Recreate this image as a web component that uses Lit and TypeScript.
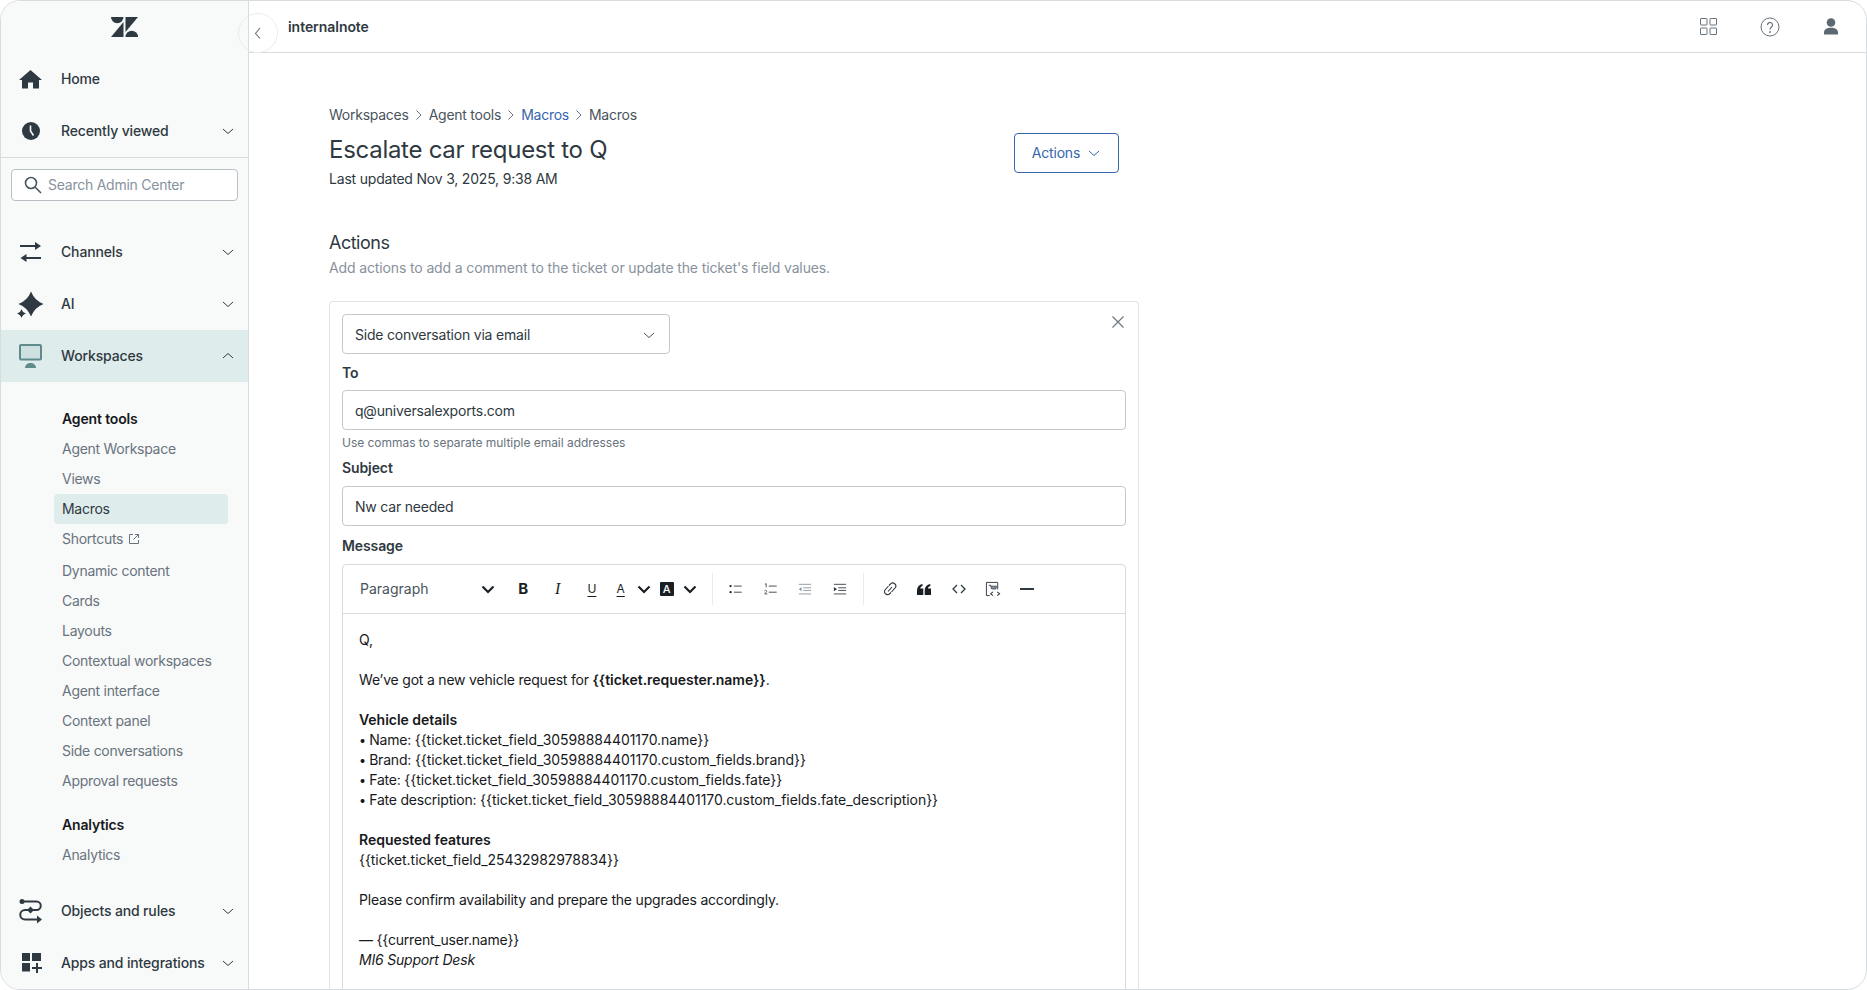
import { LitElement, html, css, svg } from "lit";
import { customElement } from "lit/decorators.js";

const ink = "#2f3941";
const chev = html`<svg class="chev" width="14" height="14" viewBox="0 0 14 14" fill="none" stroke="currentColor" stroke-width="1"><path d="M2 5l5 4.500L12 5"/></svg>`;
const chevUp = html`<svg class="chev" width="14" height="14" viewBox="0 0 14 14" fill="none" stroke="currentColor" stroke-width="1"><path d="M2 9l5-4.500L12 9"/></svg>`;
const tbChev = html`<svg width="16" height="16" viewBox="0 0 16 16" fill="none" stroke="#1a1f24" stroke-width="2.200"><path d="M2.500 5.500L8 11l5.500-5.500"/></svg>`;

const icons: Record<string, unknown> = {
  home: svg`<path fill="${ink}" d="M11.500 4L23 14h-3v8.500h-6v-6H9v6H3V14H0z"/>`,
  clock: svg`<circle cx="12" cy="13" r="9" fill="${ink}"/><path d="M11.500 7.500V13l3 4.500" stroke="#f8f9f9" stroke-width="1.600" fill="none"/>`,
  channels: svg`<g fill="none" stroke="${ink}" stroke-width="2"><path d="M1 7h18M3 19h19"/></g><path fill="${ink}" d="M16 3l6 4-6 4zM7.500 15l-6 4 6 4z"/>`,
  ai: svg`<path fill="${ink}" d="M12 .5Q15.500 9.500 24.500 13 15.500 16.500 12 25.500 8.500 16.500-.5 13 8.500 9.500 12 .5z"/><path fill="${ink}" d="M2.500 18Q3.500 21.500 7 22.500 3.500 23.500 2.500 27 1.500 23.500-2 22.500 1.500 21.500 2.500 18z"/>`,
  work: svg`<rect x="1" y="2" width="21" height="14.500" rx="1" fill="#cfe0e1" stroke="#5f8b8d" stroke-width="2"/><path fill="#5f8b8d" d="M6 25c0-3 2.500-5 5.500-5s5.500 2 5.500 5z"/>`,
  objects: svg`<g fill="none" stroke="${ink}" stroke-width="2"><path d="M4 3.500h13.500a4.200 4.200 0 0 1 0 8.500H6a4.500 4.500 0 0 0 0 9.500h14"/></g><circle cx="3" cy="3.500" r="2.500" fill="${ink}"/><path fill="${ink}" d="M11.500 8.500L15 12l-3.500 3.500L8 12zM18 17.500l5 4-5 4z"/>`,
  apps: svg`<path fill="${ink}" d="M3 3h8v8H3zM13 3h9v8h-9zM3 13h8v8.500H3zM17 13h2v4h4v2h-4v4h-2v-4h-4v-2h4z"/>`,
};

type Row = { label: string; icon: string; chev?: boolean; up?: boolean; active?: boolean };
const rowA: Row[] = [
  { label: "Home", icon: "home" },
  { label: "Recently viewed", icon: "clock", chev: true },
];
const rowB: Row[] = [
  { label: "Channels", icon: "channels", chev: true },
  { label: "AI", icon: "ai", chev: true },
  { label: "Workspaces", icon: "work", chev: true, up: true, active: true },
];
const rowC: Row[] = [
  { label: "Objects and rules", icon: "objects", chev: true },
  { label: "Apps and integrations", icon: "apps", chev: true },
];
const subItems = ["Agent Workspace", "Views", "Macros", "Shortcuts", "Dynamic content", "Cards", "Layouts", "Contextual workspaces", "Agent interface", "Context panel", "Side conversations", "Approval requests"];

@customElement("app-root")
export class AppRoot extends LitElement {
  static styles = css`
    :host { display: block; width: 1867px; height: 990px; background: #fff; font-family: Inter, "Noto Sans", sans-serif; color: #2f3941; font-size: 14px; line-height: 20px; letter-spacing: -0.2px; }
    .frame { position: relative; box-sizing: border-box; width: 1867px; height: 990px; border: 1px solid #d8dcde; border-radius: 20px; overflow: hidden; display: flex; background: #fff; }
    .side { width: 248px; flex: none; box-sizing: border-box; background: #f8f9f9; border-right: 1px solid #d8dcde; display: flex; flex-direction: column; }
    .logo { height: 52px; display: flex; align-items: flex-start; justify-content: center; padding-top: 16px; box-sizing: border-box; }
    .row { height: 52px; display: flex; align-items: center; padding: 0 13px 0 18px; font-weight: 500; color: #2f3941; letter-spacing: -0.15px; }
    .row.active { background: #dfecec; }
    .row .ic { width: 24px; height: 26px; flex: none; margin-right: 18px; display: block; overflow: visible; }
    .row .lb { flex: 1; }
    .chev { color: #2f3941; display: block; flex: none; }
    .rule { height: 1px; background: #d8dcde; }
    .search { margin: 11px 10px 25px 10px; height: 32px; box-sizing: border-box; border: 1px solid #b9c0c5; border-radius: 4px; background: #fff; display: flex; align-items: center; padding-left: 12px; gap: 6px; color: #87929d; letter-spacing: -0.25px; }
    .sub { padding: 22px 20px 0 53px; height: 503px; box-sizing: border-box; display: flex; flex-direction: column; }
    .sub .head { height: 30px; display: flex; align-items: center; padding-left: 8px; color: #17191c; font-weight: 600; letter-spacing: -0.15px; }
    .sub .it { height: 30px; display: flex; align-items: center; padding-left: 8px; color: #68737d; border-radius: 4px; flex: none; gap: 4px; letter-spacing: -0.28px; }
    .sub .it.cur { background: #dfecec; color: #2f3941; }
    .sub .it.ext { margin-bottom: 2px; gap: 5px; }
    .sub .head.second { margin-top: 14px; }
    .main { flex: 1; min-width: 0; display: flex; flex-direction: column; }
    .top { height: 52px; flex: none; box-sizing: border-box; border-bottom: 1px solid #d8dcde; display: flex; align-items: center; padding: 0 27px 0 39px; font-weight: 600; font-size: 14px; letter-spacing: -0.05px; }
    .top .nm { flex: 1; }
    .top svg { display: block; }
    .tools { display: flex; align-items: center; gap: 43px; }
    .collapse { position: absolute; left: 237px; top: 12px; width: 40px; height: 40px; box-sizing: border-box; border: 1px solid #e9ebed; border-radius: 50%; display: flex; align-items: center; justify-content: center; }
    .page { padding: 52px 0 0 80px; width: 810px; }
    .crumbs { display: flex; align-items: center; color: #49545c; gap: 6px; letter-spacing: -0.25px; }
    .crumbs a { color: #3565ad; }
    .crumbs svg { display: block; }
    .hdr { display: flex; justify-content: space-between; align-items: flex-start; padding-right: 20px; }
    h1 { margin: 9px 0 0; font-size: 24px; line-height: 32px; font-weight: 400; color: #2f3941; letter-spacing: -0.28px; }
    .upd { margin-top: 3px; color: #2f3941; }
    .btn { margin-top: 28px; width: 105px; height: 40px; box-sizing: border-box; border: 1px solid #3565ad; border-radius: 4px; color: #3565ad; display: flex; align-items: center; justify-content: center; gap: 7px; font-weight: 400; }
    .btn .chev { color: #3565ad; }
    h2 { margin: 40px 0 0; font-size: 18px; line-height: 28px; font-weight: 400; color: #2f3941; letter-spacing: -0.5px; }
    .hint2 { margin-top: 1px; color: #87929d; letter-spacing: -0.13px; }
    .card { position: relative; margin-top: 23px; border: 1px solid #e1e4e6; border-bottom: none; border-radius: 4px 4px 0 0; padding: 12px 12px 0; }
    .x { position: absolute; right: 13px; top: 13px; display: block; }
    .sel { width: 328px; height: 40px; box-sizing: border-box; border: 1px solid #c2c8cc; border-radius: 4px; display: flex; align-items: center; justify-content: space-between; padding: 1px 13px 0 12px; }
    .sel .chev { color: #49545c; }
    label { display: block; font-weight: 600; color: #2f3941; letter-spacing: -0.1px; }
    .input { height: 40px; box-sizing: border-box; border: 1px solid #c2c8cc; border-radius: 4px; display: flex; align-items: center; padding: 1px 12px 0; margin-top: 8px; }
    .f1 { margin-top: 9px; }
    .f1 + .input { margin-top: 7px; }
    .hint { margin-top: 5px; font-size: 12px; line-height: 16px; color: #68737d; letter-spacing: -0.03px; }
    .f2 { margin-top: 7px; }
    .f3 { margin-top: 10px; }
    .ed { margin-top: 8px; border: 1px solid #d8dcde; border-radius: 4px 4px 0 0; height: 500px; box-sizing: border-box; }
    .bar { height: 49px; box-sizing: border-box; border-bottom: 1px solid #d8dcde; display: flex; align-items: center; padding-left: 17px; color: #2f3941; }
    .para { width: 146px; display: flex; align-items: center; justify-content: space-between; color: #49545c; padding-right: 10px; box-sizing: border-box; flex: none; letter-spacing: 0; }
    .b { width: 34.400px; height: 24px; display: flex; align-items: center; justify-content: center; flex: none; color: #1a1f24; letter-spacing: 0; }
    .b svg { display: block; }
    .b.n { width: 23px; }
    .sep { width: 1px; height: 32px; background: #e9ebed; flex: none; }
    .s1 { margin: 0 6px 0 11px; }
    .s2 { margin: 0 9px 0 6px; }
    .tb { font-weight: 700; font-size: 15px; }
    .ti { font-family: "Liberation Serif", serif; font-style: italic; font-size: 16px; }
    .tu { text-decoration: underline; text-underline-offset: 3px; font-size: 12px; line-height: 14px; }
    .tk { background: #1a1f24; color: #fff; width: 14px; height: 14px; display: flex; align-items: center; justify-content: center; font-size: 11px; font-weight: 500; border-radius: 1px; }
    .body { padding: 16px 16px; color: #17191c; }
    .body div { height: 20px; white-space: pre; }
    .v { letter-spacing: -0.05px; }
    .dot { font-size: 12.500px; }
    b { font-weight: 600; letter-spacing: -0.03px; }
  `;

  private ic(name: string) {
    return html`<svg class="ic" viewBox="0 0 24 26" width="24" height="26">${icons[name]}</svg>`;
  }

  private row(r: Row) {
    return html`<div class="row ${r.active ? "active" : ""}">
      ${this.ic(r.icon)}<span class="lb">${r.label}</span>${r.chev ? (r.up ? chevUp : chev) : ""}
    </div>`;
  }

  render() {
    const sep = html`<svg width="8" height="12" viewBox="0 0 8 12" fill="none" stroke="#68737d"><path d="M1.500 1.500L6 6l-4.500 4.500"/></svg>`;
    const dot = html`<span class="dot">• </span>`;
    return html`<div class="frame">
      <aside class="side">
        <div class="logo">
          <svg width="27" height="20" viewBox="0 0 27 20"><g fill="${ink}">
            <path d="M0 0h12.500a6.250 6.250 0 0 1-12.500 0z"/><path d="M14.500 0H27L14.500 15z"/>
            <path d="M12.500 5v15H0z"/><path d="M14.500 20a6.250 6.250 0 0 1 12.500 0z"/></g></svg>
        </div>
        ${rowA.map((r) => this.row(r))}
        <div class="rule"></div>
        <div class="search">
          <svg width="18" height="18" viewBox="0 0 18 18" fill="none" stroke="#49545c" stroke-width="1.600"><circle cx="7" cy="7" r="5.500"/><path d="M11 11l6 6"/></svg>
          <span>Search Admin Center</span>
        </div>
        ${rowB.map((r) => this.row(r))}
        <div class="sub">
          <div class="head">Agent tools</div>
          ${subItems.map((s) => html`<div class="it ${s === "Macros" ? "cur" : ""} ${s === "Shortcuts" ? "ext" : ""}">${s}${s === "Shortcuts"
            ? html`<svg width="12" height="12" viewBox="0 0 12 12" fill="none" stroke="#68737d"><path d="M5 1.500H1.500v9h9V7M7 1.500h3.500V5M10.500 1.500L5.500 6.500"/></svg>` : ""}</div>`)}
          <div class="head second">Analytics</div>
          <div class="it">Analytics</div>
        </div>
        ${rowC.map((r) => this.row(r))}
      </aside>
      <div class="main">
        <header class="top">
          <span class="nm">internalnote</span>
          <div class="tools">
            <svg width="17" height="17" viewBox="0 0 17 17" fill="none" stroke="#68737d"><rect x=".5" y=".5" width="6.500" height="6.500" rx=".5"/><rect x="10" y=".5" width="6.500" height="6.500" rx=".5"/><rect x=".5" y="10" width="6.500" height="6.500" rx=".5"/><rect x="10" y="10" width="6.500" height="6.500" rx=".5"/></svg>
            <svg width="20" height="20" viewBox="0 0 20 20" fill="none" stroke="#68737d"><circle cx="10" cy="10" r="9"/><path d="M7.500 8a2.500 2.500 0 1 1 4 2c-1 .8-1.500 1.200-1.500 2.500" stroke-width="1.200"/><circle cx="10" cy="15" r=".9" fill="#68737d" stroke="none"/></svg>
            <svg width="16" height="17" viewBox="0 0 16 17" fill="#5c6970"><circle cx="8" cy="4.500" r="4.300"/><path d="M1 16.500v-2c0-3 2.500-4.800 7-4.800s7 1.800 7 4.800v2z"/></svg>
          </div>
        </header>
        <div class="page">
          <div class="hdr">
            <div>
              <div class="crumbs"><span>Workspaces</span>${sep}<span>Agent tools</span>${sep}<a>Macros</a>${sep}<span>Macros</span></div>
              <h1>Escalate car request to Q</h1>
              <div class="upd">Last updated Nov 3, 2025, 9:38 AM</div>
            </div>
            <div class="btn">Actions ${chev}</div>
          </div>
          <h2>Actions</h2>
          <div class="hint2">Add actions to add a comment to the ticket or update the ticket's field values.</div>
          <section class="card">
            <svg class="x" width="14" height="14" viewBox="0 0 14 14" fill="none" stroke="#68737d" stroke-width="1.100"><path d="M1.500 1.500l11 11M12.500 1.500l-11 11"/></svg>
            <div class="sel"><span>Side conversation via email</span>${chev}</div>
            <label class="f1">To</label>
            <div class="input">q@universalexports.com</div>
            <div class="hint">Use commas to separate multiple email addresses</div>
            <label class="f2">Subject</label>
            <div class="input">Nw car needed</div>
            <label class="f3">Message</label>
            <div class="ed">
              <div class="bar">
                <div class="para"><span>Paragraph</span>${tbChev}</div>
                <div class="b"><span class="tb">B</span></div>
                <div class="b"><span class="ti">I</span></div>
                <div class="b"><span class="tu">U</span></div>
                <div class="b n"><span class="tu">A</span></div>
                <div class="b n">${tbChev}</div>
                <div class="b n"><span class="tk">A</span></div>
                <div class="b n">${tbChev}</div>
                <div class="sep s1"></div>
                <div class="b"><svg width="14" height="12.250" viewBox="0 0 16 14" fill="none" stroke="#2f3941"><path d="M5.500 3.500h9M5.500 10.500h9"/><circle cx="1.800" cy="3.500" r="1.300" fill="#1a1f24" stroke="none"/><circle cx="1.800" cy="10.500" r="1.300" fill="#1a1f24" stroke="none"/></svg></div>
                <div class="b"><svg width="14" height="12.250" viewBox="0 0 16 14" fill="none" stroke="#2f3941"><path d="M5.500 3.500h9M5.500 10.500h9"/><path d="M1 1.500l1.500-.8v4.300M.6 9c1.500-1.200 3-.3 2.200 1L.8 12.500h3" stroke-width=".9"/></svg></div>
                <div class="b"><svg width="14" height="12.250" viewBox="0 0 16 14" fill="none" stroke="#87929d"><path d="M1 1.500h14M6 5.500h9M6 8.500h9M1 12.500h14"/><path d="M4 4.500L1 7l3 2.500z" fill="#87929d" stroke="none"/></svg></div>
                <div class="b"><svg width="14" height="12.250" viewBox="0 0 16 14" fill="none" stroke="#2f3941"><path d="M1 1.500h14M6 5.500h9M6 8.500h9M1 12.500h14"/><path d="M1 4.500L4.500 7 1 9.500z" fill="#2f3941" stroke="none"/></svg></div>
                <div class="sep s2"></div>
                <div class="b"><svg width="14" height="14" viewBox="0 0 14 14" fill="none" stroke="#2f3941" stroke-width="1.100"><path d="M9 5L5 9.500M6 3.500L7.500 2a3 3 0 0 1 4.500 4L8.500 10M5.500 4L2 8a3 3 0 0 0 4 4.200L8 10.500"/></svg></div>
                <div class="b"><svg width="14" height="11" viewBox="0 0 14 11" fill="#1a1f24"><path d="M0 11V6.500C0 3 2 .8 5.500 0v2C4 2.500 3.300 3.500 3.300 4.500h3V11zM7.700 11V6.500C7.700 3 9.700.8 13.300 0v2c-1.500.5-2.300 1.500-2.300 2.500h3V11z"/></svg></div>
                <div class="b"><svg width="14" height="12" viewBox="0 0 14 12" fill="none" stroke="#2f3941" stroke-width="1.300"><path d="M5 2L1 6l4 4M9 2l4 4-4 4"/></svg></div>
                <div class="b"><svg width="16" height="16" viewBox="0 0 17 17" fill="none" stroke="#2f3941"><path d="M5 15.500H1.500v-14h12V9"/><path d="M4 4.500h2l1 4h4.500l.8-3H6" fill="#87929d" stroke-width=".8"/><path d="M8.500 11.500L6 13.500l2.500 2M13 11.500l2.500 2-2.500 2" stroke-width="1.100"/></svg></div>
                <div class="b"><svg width="14" height="2" viewBox="0 0 14 2"><rect width="14" height="2" fill="#2f3941"/></svg></div>
              </div>
              <div class="body">
                <div>Q,</div>
                <div></div>
                <div>We’ve got a new vehicle request for <b>{{ticket.requester.name}}</b>.</div>
                <div></div>
                <div><b>Vehicle details</b></div>
                <div>${dot}Name: <span class="v">{{ticket.ticket_field_30598884401170.name}}</span></div>
                <div>${dot}Brand: <span class="v">{{ticket.ticket_field_30598884401170.custom_fields.brand}}</span></div>
                <div>${dot}Fate: <span class="v">{{ticket.ticket_field_30598884401170.custom_fields.fate}}</span></div>
                <div>${dot}Fate description: <span class="v">{{ticket.ticket_field_30598884401170.custom_fields.fate_description}}</span></div>
                <div></div>
                <div><b>Requested features</b></div>
                <div><span class="v">{{ticket.ticket_field_25432982978834}}</span></div>
                <div></div>
                <div>Please confirm availability and prepare the upgrades accordingly.</div>
                <div></div>
                <div>— {{current_user.name}}</div>
                <div><i>MI6 Support Desk</i></div>
              </div>
            </div>
          </section>
        </div>
      </div>
      <div class="collapse"><svg width="10" height="14" viewBox="0 0 10 14" fill="none" stroke="#68737d" stroke-width="1.100"><path d="M7 2L2.500 7.500 7 12.500"/></svg></div>
    </div>`;
  }
}
